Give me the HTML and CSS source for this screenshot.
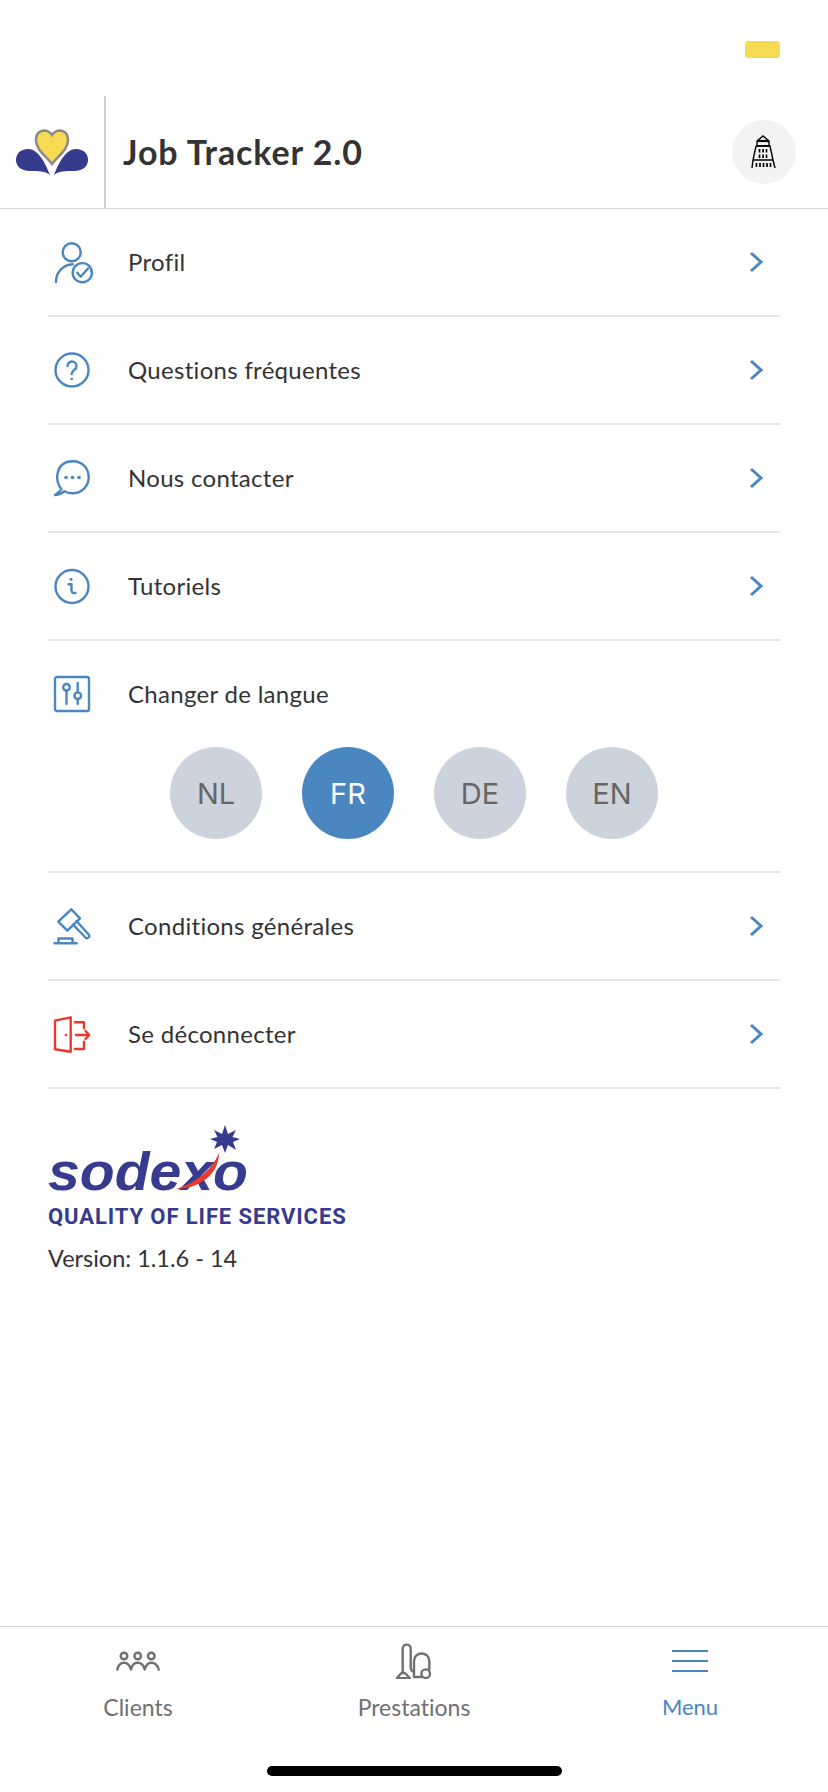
FILE: index.html
```html
<!DOCTYPE html>
<html lang="fr">
<head>
    <meta charset="UTF-8">
    <meta name="viewport" content="width=device-width, initial-scale=1.0">
    <title>Job Tracker 2.0</title>
    <link rel="stylesheet" href="styles.css">
</head>
<body>
    <div class="status-bar"><span class="status-block"></span></div>

    <header class="app-header">
        <div class="brand">
            <svg width="104" height="112" viewBox="0 0 104 112">
                <path d="M50 79 C45 66 38 53 28 53 C20 53 16 58 16 64 C16 71 22 75 30 75 C38 75 46 75 50 79 Z" fill="#363b8e"/>
                <path d="M54 79 C59 66 66 53 76 53 C84 53 88 58 88 64 C88 71 82 75 74 75 C66 75 58 75 54 79 Z" fill="#363b8e"/>
                <path d="M52 68 C46 60 36 54 36 44 C36 33 48 32 52 39 C56 32 68 33 68 44 C68 54 58 60 52 68 Z" fill="#f6db52" stroke="#8a8a8a" stroke-width="2.5"/>
            </svg>
        </div>
        <div class="app-title">Job Tracker 2.0</div>
        <button class="site-btn">
            <svg width="26" height="36" viewBox="0 0 26 36" fill="none" stroke="#000" stroke-width="1.4">
                <path d="M6 12 V7 L12 2 L18 7 V12 Z"/>
                <path d="M6 7 H18" stroke-width="2.2"/>
                <path d="M5 12 H19 L22 26 L24 34 M5 12 L2 26 L1 34 M2 26 H22"/>
                <path d="M8.5 15 V18.5 M12 15 V18.5 M15.5 15 V18.5 M8.5 20.5 V24 M12 20.5 V24 M15.5 20.5 V24" stroke-width="1.7"/>
                <path d="M5.5 29 V33 M9 29 V33 M12.5 29 V33 M16 29 V33 M19.5 29 V33" stroke-width="1.7"/>
            </svg>
        </button>
    </header>

    <main class="content">
        <a class="menu-row">
            <svg class="row-icon" width="40" height="40" viewBox="0 0 40 40">
                <circle cx="19.7" cy="10.3" r="9"/>
                <path d="M4 40 C4 30 11 23 20.7 22.3"/>
                <circle cx="30.3" cy="30.7" r="9.6"/>
                <path d="M25.3 30.7 L28.7 34.7 L36 26.5"/>
            </svg>
            <span class="row-label">Profil</span>
            <svg class="chevron" width="14" height="22" viewBox="0 0 14 22"><path d="M2 2 L12 11 L2 20"/></svg>
        </a>
        <a class="menu-row">
            <svg class="row-icon" width="40" height="40" viewBox="0 0 40 40">
                <circle cx="20" cy="20" r="16.5"/>
                <path d="M15.5 16 a4.5 4.5 0 1 1 7 3.7 c-2 1.4 -2.8 2.3 -2.8 4.3"/>
                <circle class="dot" cx="19.7" cy="29" r="1.3"/>
            </svg>
            <span class="row-label">Questions fréquentes</span>
            <svg class="chevron" width="14" height="22" viewBox="0 0 14 22"><path d="M2 2 L12 11 L2 20"/></svg>
        </a>
        <a class="menu-row">
            <svg class="row-icon" width="40" height="40" viewBox="0 0 40 40">
                <path d="M9.5 31 C1.500 23 4 3.300 20.700 3.300 C32 3.300 36.700 12 36.700 19.300 C36.700 28 29.700 35.300 20.700 35.300 C17 35.300 14.500 34.300 12.500 33.200 C9.500 35.300 6.500 36.800 3 37 C5.800 35 8 33.500 9.500 31 Z"/>
                <circle class="dot" cx="14" cy="19.500" r="1.800"/>
                <circle class="dot" cx="20.500" cy="19.500" r="1.800"/>
                <circle class="dot" cx="27" cy="19.500" r="1.800"/>
            </svg>
            <span class="row-label">Nous contacter</span>
            <svg class="chevron" width="14" height="22" viewBox="0 0 14 22"><path d="M2 2 L12 11 L2 20"/></svg>
        </a>
        <a class="menu-row">
            <svg class="row-icon" width="40" height="40" viewBox="0 0 40 40">
                <circle cx="20" cy="20.500" r="16.500"/>
                <circle class="dot" cx="19" cy="13.300" r="1.500"/>
                <path d="M16.500 18.300 H19.500 V24.500 C19.500 26.500 21 27.300 23.500 27"/>
            </svg>
            <span class="row-label">Tutoriels</span>
            <svg class="chevron" width="14" height="22" viewBox="0 0 14 22"><path d="M2 2 L12 11 L2 20"/></svg>
        </a>

        <div class="language-block">
            <div class="menu-row no-line">
                <svg class="row-icon" width="40" height="40" viewBox="0 0 40 40">
                    <rect x="3" y="3" width="34" height="34" rx="2"/>
                    <circle cx="14.500" cy="13.300" r="3.300"/>
                    <path d="M14.500 16.600 V30"/>
                    <circle cx="25.700" cy="21.700" r="3.300"/>
                    <path d="M25.700 9 V18.400 M25.700 25 V30"/>
                </svg>
                <span class="row-label">Changer de langue</span>
            </div>
            <div class="lang-list">
                <span class="lang">NL</span>
                <span class="lang active">FR</span>
                <span class="lang">DE</span>
                <span class="lang">EN</span>
            </div>
        </div>

        <a class="menu-row">
            <svg class="row-icon" width="40" height="40" viewBox="0 0 40 40">
                <path d="M19.300 3.300 L28 12.300 L15.300 24.700 L6.300 15.700 Z"/>
                <path d="M21 18.500 L33.500 31.500 C35.500 33.500 38.500 30.500 36.700 28.500 L24.500 15"/>
                <path d="M6.500 37 V32.500 H20.500 V37 M2.500 37.200 H24.700"/>
            </svg>
            <span class="row-label">Conditions générales</span>
            <svg class="chevron" width="14" height="22" viewBox="0 0 14 22"><path d="M2 2 L12 11 L2 20"/></svg>
        </a>
        <a class="menu-row">
            <svg class="row-icon logout" width="40" height="40" viewBox="0 0 40 40">
                <path d="M3 6.700 L18.700 3.300 V37.700 L3 35.300 Z"/>
                <circle class="dot" cx="14" cy="21" r="1.300"/>
                <path d="M23 8.300 H32 V14.300 M32 27.700 V35 H23"/>
                <path d="M24 21 H37 M33.500 17 L37.300 21 L33.500 25"/>
            </svg>
            <span class="row-label">Se déconnecter</span>
            <svg class="chevron" width="14" height="22" viewBox="0 0 14 22"><path d="M2 2 L12 11 L2 20"/></svg>
        </a>

        <div class="about">
            <svg class="sodexo" width="210" height="75" viewBox="0 0 210 75">
                <text class="sodexo-word" x="0" y="70" textLength="200" lengthAdjust="spacingAndGlyphs">sodexo</text>
                <path d="M128 69 C150 62 165 48 171 33 C171 52 155 68 128 69 Z" fill="#e8392e"/>
                <polygon points="177,5 180,14 188,10 184.500,17 192,19 185,22 188,30 180,25 177,33 174,25 166,29 169,22 162,19 169.500,17 166,10 174,14" fill="#363b8e"/>
            </svg>
            <div class="tagline">QUALITY OF LIFE SERVICES</div>
            <div class="version">Version: 1.1.6 - 14</div>
        </div>
    </main>

    <nav class="tab-bar">
        <div class="tabs">
            <a class="tab">
                <span class="tab-icon">
                    <svg width="44" height="24" viewBox="0 0 44 24">
                        <circle cx="8" cy="7" r="3.300"/>
                        <circle cx="21.700" cy="7" r="3.300"/>
                        <circle cx="35.300" cy="7" r="3.300"/>
                        <path d="M1.300 20.500 C2.500 15.500 5 13.700 8 13.700 C11 13.700 13.500 15.500 15 20.500 C16 15.500 18.700 13.700 21.700 13.700 C24.700 13.700 27.500 15.500 28.700 20.500 C30 15.500 32.300 13.700 35.300 13.700 C38.300 13.700 41.500 15.500 42.700 20.500"/>
                    </svg>
                </span>
                <span class="tab-label">Clients</span>
            </a>
            <a class="tab">
                <span class="tab-icon">
                    <svg width="36" height="36" viewBox="0 0 36 36">
                        <path d="M6.700 30 V5.500 C6.700 0.300 14.700 0.300 14.700 5.500 V24 C14.700 27 16 28.500 18 28.500"/>
                        <path d="M5.500 30 H9 L14 35.300 H0.700 Z"/>
                        <path d="M18 34 V18 C18 8 33.300 8 33.300 18 V26.300 M18 34 H25.500"/>
                        <circle cx="29.700" cy="30.700" r="4.300"/>
                    </svg>
                </span>
                <span class="tab-label">Prestations</span>
            </a>
            <a class="tab active">
                <span class="tab-icon">
                    <span class="burger"><i></i><i></i><i></i></span>
                </span>
                <span class="tab-label">Menu</span>
            </a>
        </div>
        <div class="home-indicator"></div>
    </nav>
</body>
</html>
```

FILE: styles.css
```css
* {
    box-sizing: border-box;
}
html, body {
    height: 100%;
}
body {
    margin: 0;
    display: flex;
    flex-direction: column;
    background-color: #fff;
    color: #333;
    font-family: Lato, "Noto Sans", sans-serif;
    font-variant-ligatures: none;
}

.status-bar {
    height: 96px;
    padding: 41px 48px 0 0;
    display: flex;
    justify-content: flex-end;
    align-items: flex-start;
}
.status-block {
    width: 35px;
    height: 17px;
    border-radius: 3px;
    background-color: #f6db52;
}

.app-header {
    height: 113px;
    display: flex;
    align-items: center;
    padding-right: 32px;
    border-bottom: 1px solid #d6d6d6;
}
.brand {
    width: 106px;
    height: 112px;
    border-right: 2px solid #d0d0d0;
}
.brand svg {
    display: block;
}
.app-title {
    flex: 1;
    margin-left: 17px;
    margin-bottom: 2px;
    font-size: 34px;
    font-weight: 700;
    letter-spacing: 0.9px;
}
.site-btn {
    width: 64px;
    height: 64px;
    padding: 0;
    border: 0;
    border-radius: 50%;
    background-color: #f3f3f5;
    display: flex;
    align-items: center;
    justify-content: center;
}

.content {
    flex: 1;
    padding: 0 48px;
}
.menu-row {
    height: 108px;
    display: flex;
    align-items: center;
    border-bottom: 2px solid #e5e5e5;
}
.menu-row.no-line {
    height: 106px;
    border-bottom: 0;
}
.row-icon {
    margin-left: 4px;
    overflow: visible;
    fill: none;
    stroke: #4a86bf;
    stroke-width: 2.4;
    stroke-linecap: round;
    stroke-linejoin: round;
}
.row-icon .dot {
    fill: #4a86bf;
    stroke: none;
}
.row-icon.logout {
    stroke: #e8392e;
}
.row-icon.logout .dot {
    fill: #e8392e;
}
.row-label {
    flex: 1;
    margin-left: 36px;
    margin-bottom: 2px;
    font-size: 24px;
    letter-spacing: 0.3px;
}
.chevron {
    margin-right: 17px;
    fill: none;
    stroke: #4a86bf;
    stroke-width: 3;
}

.language-block {
    border-bottom: 2px solid #e5e5e5;
    padding-bottom: 32px;
}
.lang-list {
    display: flex;
    justify-content: center;
    gap: 40px;
}
.lang {
    width: 92px;
    height: 92px;
    border-radius: 50%;
    background-color: #cdd3dc;
    color: #666;
    font-family: Inter, sans-serif;
    font-size: 29px;
    display: flex;
    align-items: center;
    justify-content: center;
}
.lang.active {
    background-color: #4a86bf;
    color: #fff;
}

.about {
    padding-top: 31px;
}
.sodexo {
    display: block;
    overflow: visible;
}
.sodexo-word {
    font-family: "Liberation Sans", sans-serif;
    font-style: italic;
    font-weight: 700;
    font-size: 54px;
    fill: #363b8e;
}
.tagline {
    margin-top: 10px;
    font-family: Roboto, sans-serif;
    font-weight: 700;
    font-size: 22px;
    line-height: 24px;
    letter-spacing: 0.9px;
    color: #363b8e;
    white-space: nowrap;
}
.version {
    margin-top: 13px;
    font-size: 23.5px;
    line-height: 32px;
}

.tab-bar {
    height: 166px;
    border-top: 1px solid #d6d6d6;
}
.tabs {
    display: flex;
}
.tab {
    flex: 1;
    padding-top: 16px;
    display: flex;
    flex-direction: column;
    align-items: center;
    color: #707070;
}
.tab.active {
    color: #4a86bf;
}
.tab-icon {
    height: 36px;
    display: flex;
    align-items: center;
    justify-content: center;
}
.tab-icon svg {
    fill: none;
    stroke: #707070;
    stroke-width: 2.4;
    stroke-linejoin: round;
    stroke-linecap: round;
}
.burger {
    width: 36px;
    display: flex;
    flex-direction: column;
    gap: 7.5px;
}
.burger i {
    height: 2.5px;
    background-color: #4a86bf;
}
.tab-label {
    margin-top: 13px;
    font-size: 23px;
    line-height: 30px;
}
.tab.active .tab-label {
    font-size: 22px;
}
.home-indicator {
    width: 295px;
    height: 10px;
    margin: 44px auto 0;
    border-radius: 5px;
    background-color: #000;
}
```
